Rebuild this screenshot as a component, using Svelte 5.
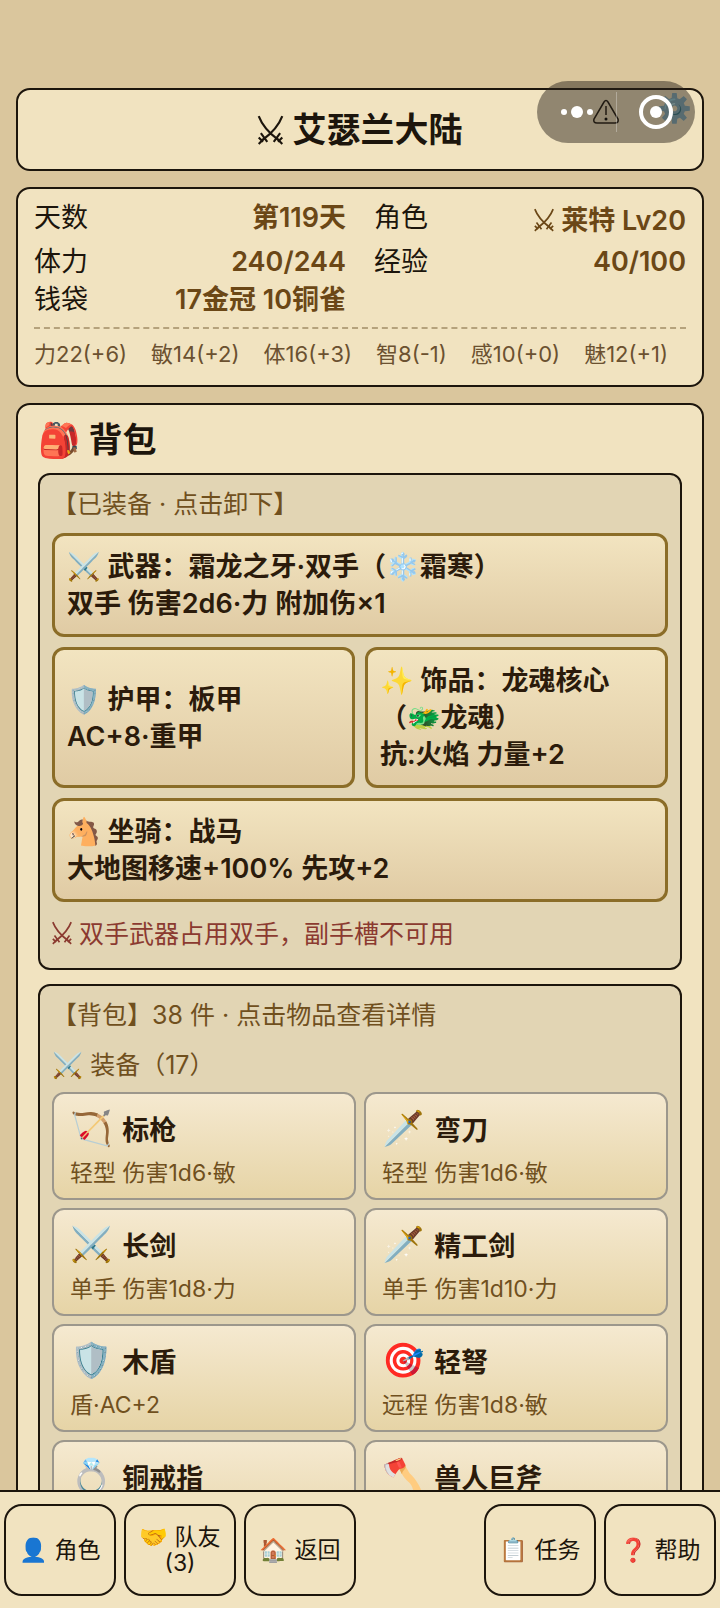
<script>
	const hero = [
		{ label: "天数", value: "第119天" },
		{ label: "角色", value: "莱特 Lv20", swords: true },
		{ label: "体力", value: "240/244" },
		{ label: "经验", value: "40/100" },
		{ label: "钱袋", value: "17金冠 10铜雀" },
	]

	const abilities = ["力22(+6)", "敏14(+2)", "体16(+3)", "智8(-1)", "感10(+0)", "魅12(+1)"]

	const slots = [
		{ icon: "⚔️", lines: ["武器：霜龙之牙·双手（❄️霜寒）", "双手 伤害2d6·力 附加伤×1"], wide: true },
		{ icon: "🛡️", lines: ["护甲：板甲", "AC+8·重甲"] },
		{ icon: "✨", lines: ["饰品：龙魂核心（🐲龙魂）", "抗:火焰 力量+2"] },
		{ icon: "🐴", lines: ["坐骑：战马", "大地图移速+100% 先攻+2"], wide: true },
	]

	const items = [
		{ icon: "🏹", name: "标枪", note: "轻型 伤害1d6·敏" },
		{ icon: "🗡️", name: "弯刀", note: "轻型 伤害1d6·敏" },
		{ icon: "⚔️", name: "长剑", note: "单手 伤害1d8·力" },
		{ icon: "🗡️", name: "精工剑", note: "单手 伤害1d10·力" },
		{ icon: "🛡️", name: "木盾", note: "盾·AC+2" },
		{ icon: "🎯", name: "轻弩", note: "远程 伤害1d8·敏" },
		{ icon: "💍", name: "铜戒指", note: "饰品" },
		{ icon: "🪓", name: "兽人巨斧", note: "双手 伤害1d12·力" },
	]

	const tabs = [
		{ icon: "👤", label: "角色" },
		{ icon: "🤝", label: "队友", count: 3 },
		{ icon: "🏠", label: "返回" },
		null,
		{ icon: "📋", label: "任务" },
		{ icon: "❓", label: "帮助" },
	]
</script>

{#snippet swords()}
	<svg class="swords" viewBox="0 0 24 28" aria-hidden="true">
		<path d="M1 1 C4 9 11 17 19 23 M23 1 C20 9 13 17 5 23" />
		<path d="M3 17 L9 25 M21 17 L15 25 M1 27 L6 22 M23 27 L18 22" />
		<path d="M1 21 L5 25 M23 21 L19 25" />
	</svg>
{/snippet}

<div class="app">
	<div class="capsule">
		<button class="capsule-btn" aria-label="更多">
			<svg width="36" height="16" viewBox="0 0 36 16">
				<circle cx="5" cy="8" r="3" />
				<circle cx="18" cy="8" r="6" />
				<circle cx="31" cy="8" r="3" />
			</svg>
		</button>
		<button class="capsule-btn divided" aria-label="关闭">
			<svg width="36" height="36" viewBox="0 0 36 36">
				<circle class="ring" cx="18" cy="18" r="15" />
				<circle cx="18" cy="18" r="6" />
			</svg>
		</button>
	</div>

	<main>
		<header class="panel title-bar">
			<h1>{@render swords()} 艾瑟兰大陆</h1>
			<div class="tools">
				<button class="tool" aria-label="反馈">
					<svg width="26" height="26" viewBox="0 0 26 26">
						<path class="warn" d="M11 3 Q13 0 15 3 L25 20 Q26 24 22 24 L4 24 Q0 24 1 20 Z M13 7 V16" />
						<circle cx="13" cy="20" r="1.5" />
					</svg>
				</button>
				<button class="tool emoji" aria-label="设置">⚙️</button>
			</div>
		</header>

		<section class="panel status">
			<dl>
				{#each hero as row}
					<div>
						<dt>{row.label}</dt>
						<dd class:tall={row.swords}>{#if row.swords}{@render swords()}{/if} {row.value}</dd>
					</div>
				{/each}
			</dl>
			<ul class="abilities">
				{#each abilities as ability}
					<li>{ability}</li>
				{/each}
			</ul>
		</section>

		<section class="panel bag">
			<h2><span class="emoji">🎒</span> 背包</h2>

			<div class="box">
				<p class="label">【已装备 · 点击卸下】</p>
				<div class="slots">
					{#each slots as slot}
						<button class="slot" class:wide={slot.wide}>
							<span><span class="emoji">{slot.icon}</span> {slot.lines[0]}</span>
							<span>{slot.lines[1]}</span>
						</button>
					{/each}
				</div>
				<p class="notice">{@render swords()} 双手武器占用双手，副手槽不可用</p>
			</div>

			<div class="box">
				<p class="label">【背包】38 件 · 点击物品查看详情</p>
				<h3><span class="emoji">⚔️</span> 装备（17）</h3>
				<div class="items">
					{#each items as item}
						<button class="item">
							<span class="name"><span class="emoji">{item.icon}</span>{item.name}</span>
							<span class="note">{item.note}</span>
						</button>
					{/each}
				</div>
			</div>
		</section>
	</main>

	<nav>
		{#each tabs as tab}
			{#if tab}
				<button class="tab">
					<span><span class="emoji">{tab.icon}</span> {tab.label}</span>
					{#if tab.count}<span>({tab.count})</span>{/if}
				</button>
			{:else}
				<span></span>
			{/if}
		{/each}
	</nav>
</div>

<style>
	:global(body) {
		background: #dac69d;
	}

	.app {
		position: relative;
		display: flex;
		flex-direction: column;
		height: 100vh;
		color: #1c150c;
		font-family: Inter, "Noto Sans CJK SC", "Noto Color Emoji", sans-serif;
		font-size: 27px;
	}

	.app * {
		box-sizing: border-box;
	}

	h1,
	h2,
	h3,
	p,
	dl,
	dd,
	ul {
		margin: 0;
		padding: 0;
	}

	button {
		padding: 0;
		border: 0;
		background: none;
		color: inherit;
		font: inherit;
		cursor: pointer;
	}

	.emoji {
		font-family: "Noto Color Emoji", sans-serif;
		font-weight: 400;
		line-height: 1;
	}

	main {
		flex: 1;
		min-height: 0;
		display: flex;
		flex-direction: column;
		gap: 16px;
		padding: 88px 16px 16px;
		overflow-y: auto;
		scrollbar-width: none;
	}

	.panel {
		flex: none;
		border: 2px solid #1c150c;
		border-radius: 14px;
		background: #f1e3c0;
	}

	.swords {
		width: 20px;
		height: 26px;
		fill: none;
		stroke: currentColor;
		stroke-width: 2;
		vertical-align: -3px;
	}

	/* title */
	.title-bar {
		display: grid;
		grid-template-columns: 1fr auto 1fr;
		align-items: center;
		height: 83px;
		padding: 0 10px;
	}

	h1 {
		grid-column: 2;
		font-size: 34px;
		line-height: 48px;
	}

	h1 .swords {
		width: 27px;
		height: 30px;
	}

	.tools {
		display: flex;
		align-self: start;
		justify-content: flex-end;
		align-items: center;
		gap: 38px;
	}

	.tool {
		height: 38px;
		font-size: 28px;
		line-height: 38px;
	}

	.tool svg {
		display: block;
		margin-top: 6px;
	}

	.warn {
		fill: none;
		stroke: #1c150c;
		stroke-width: 1.5;
	}

	.capsule {
		position: absolute;
		top: 81px;
		right: 25px;
		z-index: 2;
		display: grid;
		grid-template-columns: 1fr 1fr;
		align-items: center;
		width: 158px;
		height: 62px;
		border-radius: 31px;
		background: rgba(40, 34, 26, 0.48);
	}

	.capsule-btn {
		display: flex;
		align-items: center;
		justify-content: center;
		height: 40px;
	}

	.capsule-btn svg {
		fill: #fff;
	}

	.capsule-btn.divided {
		border-left: 1px solid rgba(255, 255, 255, 0.3);
	}

	.capsule-btn .ring {
		fill: none;
		stroke: #fff;
		stroke-width: 4;
	}

	/* status */
	.status {
		padding: 10px 16px 14px;
	}

	dl {
		display: grid;
		grid-template-columns: 1fr 1fr;
		column-gap: 28px;
		line-height: 38px;
	}

	dl div {
		display: flex;
		justify-content: space-between;
	}

	dd {
		color: #6b4716;
		font-weight: 600;
	}

	dd.tall {
		line-height: 44px;
	}

	.abilities {
		display: flex;
		flex-wrap: wrap;
		column-gap: 24px;
		margin-top: 8px;
		padding-top: 8px;
		border-top: 2px dashed #b5a27c;
		color: #6b5130;
		font-size: 22px;
		line-height: 34px;
		list-style: none;
	}

	/* bag */
	.bag {
		padding: 12px 20px;
	}

	h2 {
		margin-bottom: 10px;
		font-size: 34px;
		line-height: 46px;
	}

	.box {
		padding: 10px 12px 12px;
		border: 2px solid #1c150c;
		border-radius: 12px;
		background: #e2d5b4;
	}

	.box + .box {
		margin-top: 14px;
	}

	.label,
	h3 {
		color: #70501e;
		font-size: 25px;
		font-weight: 400;
	}

	.label {
		margin-bottom: 10px;
		line-height: 38px;
	}

	h3 {
		margin-bottom: 6px;
		line-height: 42px;
	}

	.notice {
		margin-top: 10px;
		color: #8b3a30;
		font-size: 25px;
		line-height: 44px;
	}

	.slots {
		display: grid;
		grid-template-columns: 1fr 1fr;
		gap: 10px;
	}

	.slot {
		display: flex;
		flex-direction: column;
		justify-content: center;
		padding: 12px;
		border: 3px solid #8b6d28;
		border-radius: 12px;
		background: linear-gradient(#f2e4c0, #e0cba4);
		color: #2b1b0b;
		font-weight: 600;
		line-height: 37px;
		text-align: left;
	}

	.slot.wide {
		grid-column: 1 / -1;
	}

	.items {
		display: grid;
		grid-template-columns: 1fr 1fr;
		gap: 8px;
	}

	.item {
		display: flex;
		flex-direction: column;
		gap: 6px;
		padding: 12px 16px 8px;
		border: 2px solid #9c978c;
		border-radius: 12px;
		background: linear-gradient(#f5e9d0, #e6d4a6);
		text-align: left;
	}

	.name {
		display: flex;
		align-items: center;
		gap: 10px;
		height: 44px;
		color: #2b1b0b;
		font-weight: 700;
	}

	.name .emoji {
		font-size: 34px;
	}

	.note {
		color: #70501e;
		font-size: 23px;
		line-height: 34px;
	}

	/* bottom tabs */
	nav {
		display: grid;
		grid-template-columns: repeat(6, 1fr);
		gap: 8px;
		padding: 12px 4px;
		border-top: 2px solid #1c150c;
		background: #f1e3c0;
	}

	.tab {
		display: flex;
		flex-direction: column;
		align-items: center;
		justify-content: center;
		height: 92px;
		border: 2px solid #1c150c;
		border-radius: 18px;
		font-size: 23px;
		line-height: 26px;
	}
</style>
